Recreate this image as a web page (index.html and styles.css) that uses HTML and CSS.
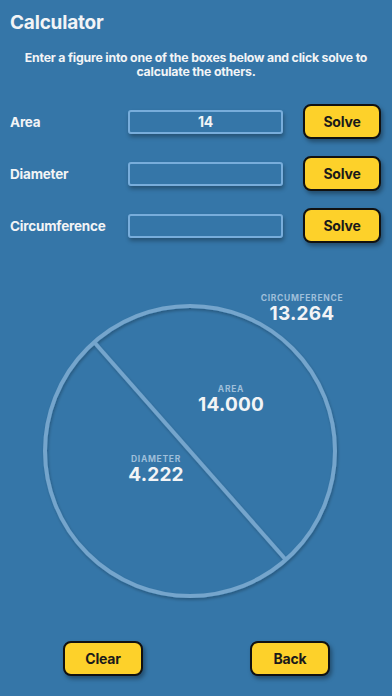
FILE: index.html
```html
<!DOCTYPE html>
<html>
  <head>
    <title>Calculator</title>
    <link rel="stylesheet" href="styles.css">
  </head>

  <body>
    <div class="title">Calculator</div>
    <p class="intro">Enter a figure into one of the boxes below and click solve to calculate the others.</p>

    <div class="form">
      <div class="row">
        <div class="label">Area</div>
        <div class="box">14</div>
        <div class="btn">Solve</div>
      </div>
      <div class="row">
        <div class="label">Diameter</div>
        <div class="box"></div>
        <div class="btn">Solve</div>
      </div>
      <div class="row">
        <div class="label">Circumference</div>
        <div class="box"></div>
        <div class="btn">Solve</div>
      </div>
    </div>

    <div class="diagram">
      <svg class="circle" width="392" height="330" viewBox="0 0 392 330">
        <defs>
          <filter id="soft" x="-10%" y="-10%" width="120%" height="120%">
            <feDropShadow dx="1" dy="2" stdDeviation="1.5" flood-color="#000" flood-opacity="0.25" />
          </filter>
        </defs>
        <g filter="url(#soft)" stroke="#74a5cc" stroke-width="4" fill="none">
          <circle cx="190" cy="170" r="145" />
          <line x1="94" y1="61" x2="286" y2="279" />
        </g>
      </svg>

      <div class="reading circ">
        <div class="name">CIRCUMFERENCE</div>
        <div class="value">13.264</div>
      </div>
      <div class="reading area">
        <div class="name">AREA</div>
        <div class="value">14.000</div>
      </div>
      <div class="reading diam">
        <div class="name">DIAMETER</div>
        <div class="value">4.222</div>
      </div>
    </div>

    <div class="footer">
      <div class="btn wide">Clear</div>
      <div class="btn wide">Back</div>
    </div>
  </body>
</html>
```

FILE: styles.css
```css
html {
  height: 100%;
}

body {
  margin: 0;
  height: 100%;
  background: #3576a8;
  color: #f2f4f6;
  font-family: Inter, "Liberation Sans", sans-serif;
  font-weight: 700;
  letter-spacing: -0.2px;
}

.title {
  padding: 11px 0 0 10px;
  font-size: 19px;
  line-height: 24px;
  letter-spacing: -0.2px;
}

.intro {
  margin: 16px 6px 0;
  font-size: 12.3px;
  line-height: 14px;
  text-align: center;
}

.form {
  margin-top: 25px;
  display: flex;
  flex-direction: column;
  gap: 17px;
}

.row {
  display: flex;
  align-items: center;
  height: 35px;
}

.label {
  width: 118px;
  padding-left: 10px;
  font-size: 13.5px;
}

.box {
  width: 151px;
  height: 20px;
  border: 2px solid #78addb;
  border-radius: 3px;
  box-shadow: 1px 3px 4px rgba(0, 0, 0, 0.3);
  text-align: center;
  font-size: 14px;
  line-height: 20px;
}

.btn {
  margin-left: 20px;
  width: 74px;
  height: 31px;
  border: 2px solid #111;
  border-radius: 8px;
  background: #fdd12a;
  color: #1a1a1a;
  box-shadow: 2px 3px 4px rgba(0, 0, 0, 0.35);
  display: flex;
  justify-content: center;
  align-items: center;
  font-size: 14px;
}

.diagram {
  position: relative;
  margin-top: 38px;
  height: 330px;
}

.circle {
  display: block;
}

.reading {
  position: absolute;
  text-align: center;
  transform: translateX(-50%);
}

.name {
  color: #9fbfda;
  font-size: 8.5px;
  line-height: 9px;
  letter-spacing: 0.7px;
}

.value {
  font-size: 19px;
  line-height: 22px;
  letter-spacing: 0.2px;
}

.circ {
  left: 302px;
  top: 13px;
}

.area {
  left: 231px;
  top: 104px;
}

.diam {
  left: 156px;
  top: 174px;
}

.footer {
  margin-top: 30px;
  padding-left: 63px;
  display: flex;
  gap: 107px;
}

.footer .btn {
  margin-left: 0;
  width: 76px;
}
```
